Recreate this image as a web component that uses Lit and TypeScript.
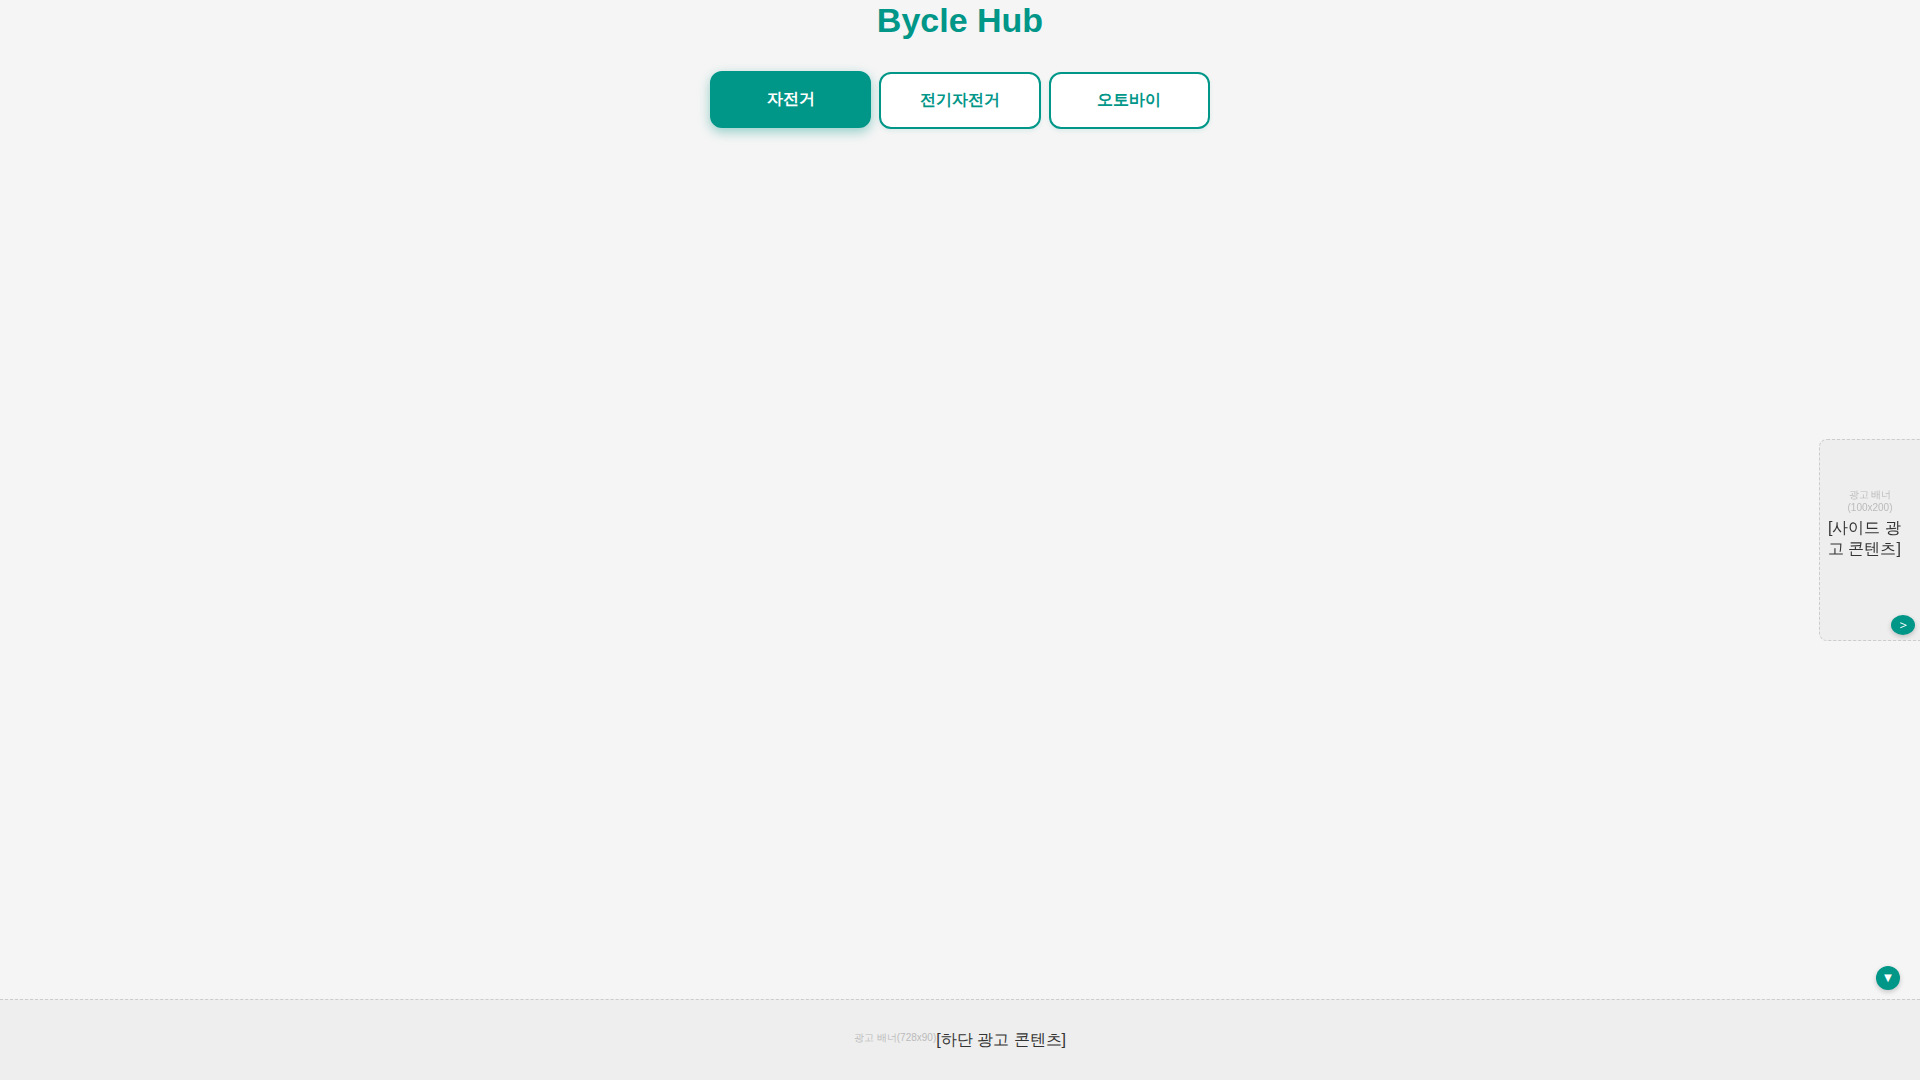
import { LitElement, html, css } from "lit";
import { customElement, state } from "lit/decorators.js";

const CATEGORIES = ["자전거", "전기자전거", "오토바이"];

@customElement("app-root")
export class AppRoot extends LitElement {
  static styles = css`
    :host {
      display: flex;
      flex-direction: column;
      min-height: 100vh;
      box-sizing: border-box;
      background: #f5f5f5;
      color: #333;
      font-family: "Liberation Sans", sans-serif;
      font-size: 16px;
    }
    header {
      display: flex;
      flex-direction: column;
      align-items: center;
      gap: 32px;
    }
    h1 {
      margin: 0;
      color: #009688;
      font-size: 34px;
      line-height: 40px;
    }
    .tabs {
      display: flex;
      gap: 8px;
      width: 100%;
      max-width: 500px;
    }
    .tab {
      flex: 1;
      box-sizing: border-box;
      padding: 14px 8px 16px;
      border: 2px solid #009688;
      border-radius: 12px;
      background: #fff;
      color: #009688;
      font: inherit;
      font-weight: 700;
      line-height: 23px;
      cursor: pointer;
      box-shadow: 0 2px 4px rgba(0, 150, 136, 0.1);
    }
    .tab.active {
      background: #009688;
      color: #fff;
      transform: translateY(-1px);
      box-shadow: 0 4px 12px rgba(0, 150, 136, 0.4);
    }
    .side {
      position: fixed;
      top: 50%;
      right: 0;
      transform: translateY(-50%);
      box-sizing: border-box;
      width: 101px;
      height: 202px;
      padding: 0 8px 33px;
      display: flex;
      flex-direction: column;
      justify-content: center;
      background: #eee;
      border: 1px dashed #ccc;
      border-right: 0;
      border-radius: 8px 0 0 8px;
      line-height: 21px;
    }
    .label {
      color: #bbb;
      font-size: 10px;
      line-height: 13px;
      text-align: center;
    }
    .side .label {
      margin-bottom: 3px;
    }
    .toggle {
      width: 24px;
      padding: 0;
      border: 0;
      border-radius: 50%;
      background: #009688;
      color: #fff;
      font: inherit;
      font-size: 13px;
      cursor: pointer;
      box-shadow: 0 2px 5px rgba(0, 0, 0, 0.2);
    }
    .side .toggle {
      position: absolute;
      right: 5px;
      bottom: 5px;
      height: 20px;
      line-height: 18px;
    }
    footer {
      position: relative;
      margin-top: auto;
      box-sizing: border-box;
      min-height: 81px;
      padding-bottom: 2px;
      display: flex;
      align-items: center;
      justify-content: center;
      background: #eee;
      border-top: 1px dashed #ccc;
      line-height: 21px;
    }
    footer .label {
      margin-bottom: 4px;
    }
    footer .toggle {
      position: absolute;
      right: 20px;
      bottom: 90px;
      height: 24px;
      line-height: 24px;
    }
  `;

  @state() private active = CATEGORIES[0];
  @state() private sideOpen = true;
  @state() private bottomOpen = true;

  render() {
    return html`
      <header>
        <h1>Bycle Hub</h1>
        <nav class="tabs">
          ${CATEGORIES.map(
            (name) => html`<button
              class="tab ${name === this.active ? "active" : ""}"
              aria-pressed=${name === this.active}
              @click=${() => (this.active = name)}
            >${name}</button>`
          )}
        </nav>
      </header>
      ${this.sideOpen
        ? html`<aside class="side">
            <div class="label">광고 배너<br />(100x200)</div>
            <div>[사이드 광고 콘텐츠]</div>
            <button class="toggle" @click=${() => (this.sideOpen = false)}>＞</button>
          </aside>`
        : null}
      ${this.bottomOpen
        ? html`<footer>
            <span class="label">광고 배너(728x90)</span>
            <span>[하단 광고 콘텐츠]</span>
            <button class="toggle" @click=${() => (this.bottomOpen = false)}>▼</button>
          </footer>`
        : null}
    `;
  }
}
